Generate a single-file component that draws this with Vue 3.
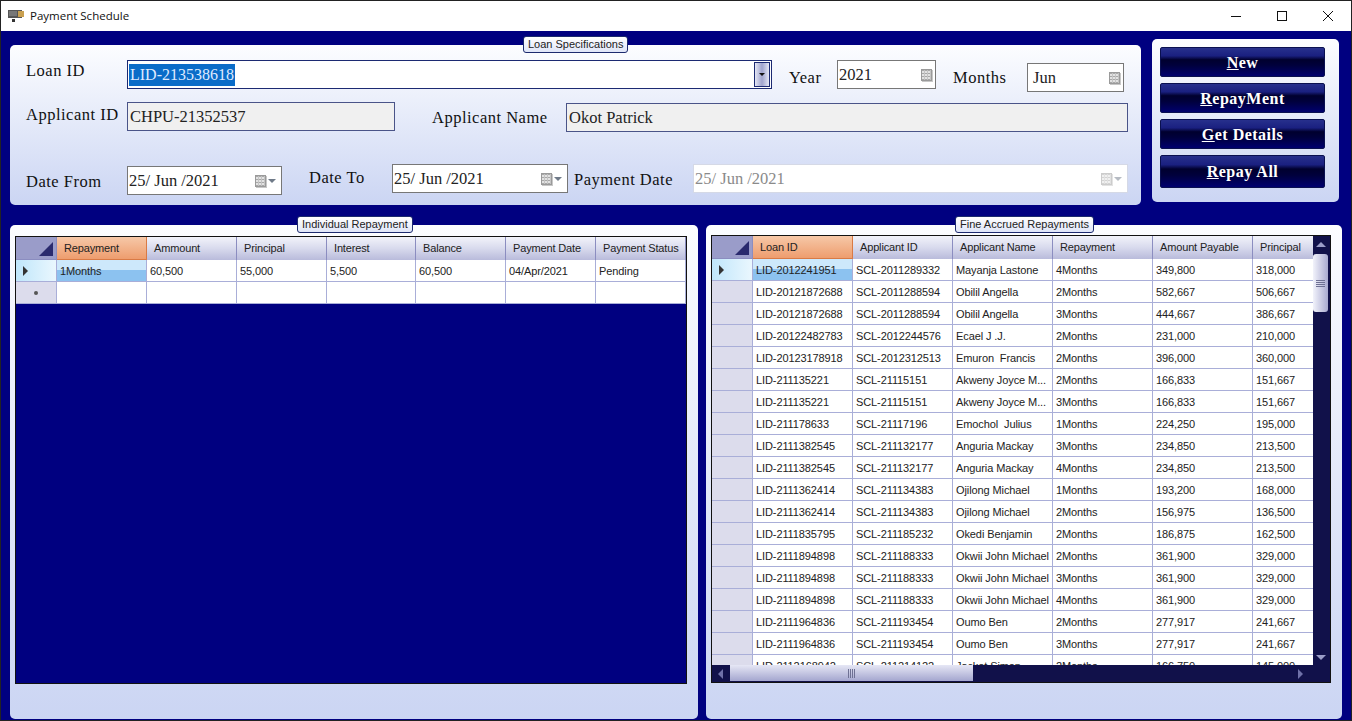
<script setup>
const left_cols = ['Repayment', 'Ammount', 'Principal', 'Interest', 'Balance', 'Payment Date', 'Payment Status']
const left_rows = [
    ['1Months', '60,500', '55,000', '5,500', '60,500', '04/Apr/2021', 'Pending']
]

const right_cols = ['Loan ID', 'Applicant ID', 'Applicant Name', 'Repayment', 'Amount Payable', 'Principal']
const right_rows = [
    ['LID-2012241951', 'SCL-2011289332', 'Mayanja Lastone', '4Months', '349,800', '318,000'],
    ['LID-20121872688', 'SCL-2011288594', 'Obilil Angella', '2Months', '582,667', '506,667'],
    ['LID-20121872688', 'SCL-2011288594', 'Obilil Angella', '3Months', '444,667', '386,667'],
    ['LID-20122482783', 'SCL-2012244576', 'Ecael J .J.', '2Months', '231,000', '210,000'],
    ['LID-20123178918', 'SCL-2012312513', 'Emuron  Francis', '2Months', '396,000', '360,000'],
    ['LID-211135221', 'SCL-21115151', 'Akweny Joyce M...', '2Months', '166,833', '151,667'],
    ['LID-211135221', 'SCL-21115151', 'Akweny Joyce M...', '3Months', '166,833', '151,667'],
    ['LID-211178633', 'SCL-21117196', 'Emochol  Julius', '1Months', '224,250', '195,000'],
    ['LID-2111382545', 'SCL-211132177', 'Anguria Mackay', '3Months', '234,850', '213,500'],
    ['LID-2111382545', 'SCL-211132177', 'Anguria Mackay', '4Months', '234,850', '213,500'],
    ['LID-2111362414', 'SCL-211134383', 'Ojilong Michael', '1Months', '193,200', '168,000'],
    ['LID-2111362414', 'SCL-211134383', 'Ojilong Michael', '2Months', '156,975', '136,500'],
    ['LID-2111835795', 'SCL-211185232', 'Okedi Benjamin', '2Months', '186,875', '162,500'],
    ['LID-2111894898', 'SCL-211188333', 'Okwii John Michael', '2Months', '361,900', '329,000'],
    ['LID-2111894898', 'SCL-211188333', 'Okwii John Michael', '3Months', '361,900', '329,000'],
    ['LID-2111894898', 'SCL-211188333', 'Okwii John Michael', '4Months', '361,900', '329,000'],
    ['LID-2111964836', 'SCL-211193454', 'Oumo Ben', '2Months', '277,917', '241,667'],
    ['LID-2111964836', 'SCL-211193454', 'Oumo Ben', '3Months', '277,917', '241,667'],
    ['LID-2112168942', 'SCL-211214122', 'Jackot Simon', '2Months', '166,750', '145,000']
]

const buttons = [
    { key: 'N', rest: 'ew' },
    { key: 'R', rest: 'epayMent' },
    { key: 'G', rest: 'et Details' },
    { key: 'R', rest: 'epay All' }
]
</script>

<template>
    <div class="window">
        <div class="titlebar">
            <svg class="app_icon" width="16" height="14" viewBox="0 0 16 14">
                <rect x="0" y="1" width="14" height="8" fill="#555"/>
                <rect x="1" y="2" width="8" height="5" fill="#777"/>
                <rect x="10" y="2" width="6" height="6" fill="#c9a050"/>
                <rect x="4" y="10" width="3" height="3" fill="#333"/>
            </svg>
            <span class="title">Payment Schedule</span>
            <div class="win_btns">
                <svg width="12" height="12" viewBox="0 0 12 12"><path d="M1 6.5h10" stroke="#111" fill="none"/></svg>
                <svg width="12" height="12" viewBox="0 0 12 12"><rect x="1.5" y="1.5" width="9" height="9" stroke="#111" fill="none"/></svg>
                <svg width="12" height="12" viewBox="0 0 12 12"><path d="M1 1l10 10M11 1L1 11" stroke="#111" fill="none"/></svg>
            </div>
        </div>

        <div class="content">
            <div class="top_row">
                <section class="panel spec">
                    <span class="legend spec_legend">Loan Specifications</span>
                    <div class="row row1">
                        <label class="lbl lbl_loan">Loan ID</label>
                        <div class="combo">
                            <span class="selected">LID-213538618</span>
                            <span class="combo_btn"><i></i></span>
                        </div>
                        <label class="lbl lbl_year">Year</label>
                        <div class="box year_box">
                            <span>2021</span>
                            <span class="cal"><i></i></span>
                        </div>
                        <label class="lbl lbl_months">Months</label>
                        <div class="box month_box">
                            <span>Jun</span>
                            <span class="cal"><i></i></span>
                        </div>
                    </div>
                    <div class="row row2">
                        <label class="lbl lbl_appid">Applicant ID</label>
                        <div class="readonly appid_box">CHPU-21352537</div>
                        <label class="lbl lbl_appname">Applicant Name</label>
                        <div class="readonly appname_box">Okot Patrick</div>
                    </div>
                    <div class="row row3">
                        <label class="lbl lbl_from">Date From</label>
                        <div class="box from_box">
                            <span>25/ Jun /2021</span>
                            <span class="cal"><i></i><b></b></span>
                        </div>
                        <label class="lbl lbl_to">Date To</label>
                        <div class="box to_box">
                            <span>25/ Jun /2021</span>
                            <span class="cal"><i></i><b></b></span>
                        </div>
                        <label class="lbl lbl_pay">Payment Date</label>
                        <div class="box pay_box disabled">
                            <span>25/ Jun /2021</span>
                            <span class="cal"><i></i><b></b></span>
                        </div>
                    </div>
                </section>

                <section class="panel actions">
                    <button v-for="(btn, i) in buttons" :key="i" class="action" :class="{ last: i == 3 }">
                        <u>{{ btn.key }}</u>{{ btn.rest }}
                    </button>
                </section>
            </div>

            <div class="bottom_row">
                <section class="panel grid_panel left_panel">
                    <span class="legend left_legend">Individual Repayment</span>
                    <div class="grid left_grid">
                        <div class="grid_head">
                            <div class="corner"><i></i></div>
                            <div v-for="(c, i) in left_cols" :key="c" class="hcell" :class="{ sorted: i == 0 }">{{ c }}</div>
                        </div>
                        <div v-for="(r, ri) in left_rows" :key="ri" class="grid_row">
                            <div class="rhead current"><i></i></div>
                            <div v-for="(v, ci) in r" :key="ci" class="cell" :class="{ active: ci == 0 }">{{ v }}</div>
                        </div>
                        <div class="grid_row">
                            <div class="rhead"><em></em></div>
                            <div v-for="c in left_cols" :key="c" class="cell"></div>
                        </div>
                    </div>
                </section>

                <section class="panel grid_panel right_panel">
                    <span class="legend right_legend">Fine Accrued Repayments</span>
                    <div class="grid right_grid">
                        <div class="rows_area">
                            <div class="grid_head">
                                <div class="corner"><i></i></div>
                                <div v-for="(c, i) in right_cols" :key="c" class="hcell" :class="{ sorted: i == 0 }">{{ c }}</div>
                            </div>
                            <div v-for="(r, ri) in right_rows" :key="ri" class="grid_row">
                                <div class="rhead" :class="{ current: ri == 0 }"><i v-if="ri == 0"></i></div>
                                <div v-for="(v, ci) in r" :key="ci" class="cell" :class="{ active: ri == 0 && ci == 0 }">{{ v }}</div>
                            </div>
                        </div>
                        <div class="vscroll">
                            <span class="arrow_up"></span>
                            <div class="vthumb"><i></i></div>
                            <span class="arrow_down"></span>
                        </div>
                        <div class="hscroll">
                            <span class="arrow_left"></span>
                            <div class="hthumb"><i></i></div>
                            <span class="arrow_right"></span>
                        </div>
                    </div>
                </section>
            </div>
        </div>
    </div>
</template>

<style>
html, body {
    margin: 0;
    background: #000080;
    overflow: hidden;
}
</style>

<style scoped>
* {
    box-sizing: border-box;
}
.window {
    width: 1352px;
    height: 721px;
    display: flex;
    flex-direction: column;
    background: #000080;
    border: 1px solid #222;
    overflow: hidden;
}
.titlebar {
    height: 30px;
    flex: none;
    background: #fff;
    display: flex;
    align-items: center;
    padding-left: 7px;
}
.app_icon {
    margin-right: 6px;
}
.title {
    font: 11.5px "Open Sans", sans-serif;
    color: #111;
    margin-top: -1px;
}
.win_btns {
    margin-left: auto;
    display: flex;
    gap: 34px;
    padding-right: 17px;
}
.content {
    flex: 1;
    display: flex;
    flex-direction: column;
    min-height: 0;
}
.top_row {
    display: flex;
    align-items: flex-start;
    height: 174px;
    flex: none;
}
.panel {
    position: relative;
    background: linear-gradient(#fcfdff, #cbd5f3);
    border-radius: 5px;
}
.legend {
    position: absolute;
    font: 11px "Liberation Sans", sans-serif;
    color: #222;
    background: linear-gradient(#fff, #dfe5f8);
    border: 1px solid #1c2a6e;
    border-radius: 3px;
    height: 17px;
    line-height: 15px;
    padding: 0 4px;
    white-space: nowrap;
}
.spec {
    width: 1131px;
    height: 160px;
    margin: 14px 0 0 9px;
    padding-left: 16px;
}
.spec_legend {
    left: 513px;
    top: -9px;
}
.row {
    display: flex;
    align-items: flex-start;
}
.row1 { height: 42px; padding-top: 15px; }
.row2 { height: 77px; padding-top: 15px; }
.lbl {
    font: 16.5px "Liberation Serif", serif;
    letter-spacing: 0.5px;
    color: #111;
    white-space: nowrap;
    flex: none;
}
.combo, .box, .readonly {
    font: 16.5px "Liberation Serif", serif;
    height: 29px;
    flex: none;
    display: flex;
    align-items: center;
    color: #222;
}
.combo {
    width: 645px;
    background: #fff;
    border: 1px solid #1c2a72;
    padding: 0 1px 0 1px;
    justify-content: space-between;
}
.selected {
    background: #0a6cc8;
    color: #dfeaff;
    font-size: 16px;
    line-height: 22px;
    padding: 0 1px;
}
.combo_btn {
    width: 16px;
    height: 25px;
    border: 1px solid #1c2a72;
    background: linear-gradient(90deg, #e4e6f4, #9fa3cd 50%, #e4e6f4);
    display: flex;
    align-items: center;
    justify-content: center;
}
.combo_btn i {
    border: 3px solid transparent;
    border-top: 3px solid #111;
    border-bottom: none;
}
.box {
    background: #fff;
    border: 1px solid #777;
    padding: 0 2px 0 1px;
    justify-content: space-between;
}
.cal {
    display: flex;
    align-items: center;
    gap: 2px;
    margin-right: 3px;
}
.cal i {
    width: 11px;
    height: 12px;
    background:
        repeating-linear-gradient(90deg, transparent 0 2px, #c4c4c4 2px 3px),
        repeating-linear-gradient(0deg, #a8a8a8 0 1px, #e2e2e2 1px 3px);
    border: 1px solid #9a9a9a;
    box-shadow: 1px 1px 0 #c8c8c8;
}
.cal b {
    border: 4px solid transparent;
    border-top: 4px solid #6f7a88;
    border-bottom: none;
}
.year_box .cal, .month_box .cal {
    margin-right: 1px;
}
.lbl_loan { width: 101px; margin-top: 1px; }
.lbl_year { width: 48px; margin: 8px 0 0 17px; }
.year_box { width: 99px; }
.lbl_months { width: 74px; margin: 8px 0 0 17px; }
.month_box { width: 97px; margin-top: 3px; padding-left: 5px; }
.lbl_appid { width: 101px; margin-top: 3px; }
.appid_box { width: 268px; }
.lbl_appname { width: 134px; margin: 6px 0 0 37px; }
.readonly {
    background: #f0f0f0;
    border: 1px solid #4a5488;
    padding: 0 2px;
}
.appname_box { width: 562px; margin-top: 1px; }
.lbl_from { width: 101px; margin-top: 8px; }
.from_box { width: 155px; margin-top: 2px; }
.lbl_to { width: 83px; margin: 4px 0 0 27px; }
.to_box { width: 176px; }
.lbl_pay { width: 119px; margin: 6px 0 0 6px; }
.pay_box { width: 435px; }
.disabled {
    border-color: #d5d9e6;
    color: #8a8a8a;
}
.disabled .cal { opacity: .5; }

.actions {
    width: 187px;
    height: 163px;
    margin: 8px 0 0 11px;
    padding: 8px 14px 0 8px;
    display: flex;
    flex-direction: column;
    gap: 6px;
}
.action {
    height: 30px;
    border: 1px solid #0a1050;
    border-radius: 2px;
    background: linear-gradient(#27308c, #1a2080 28%, #00002e 42%, #00003c 62%, #00006e);
    color: #fff;
    font: bold 16px "Liberation Serif", serif;
    letter-spacing: 0.5px;
    padding: 1px 0 0;
}
.action.last { height: 33px; }

.bottom_row {
    flex: 1;
    display: flex;
    min-height: 0;
}
.grid_panel {
    height: 494px;
    margin-top: 20px;
}
.left_panel {
    width: 688px;
    margin-left: 9px;
    padding: 11px 0 0 5px;
}
.right_panel {
    width: 636px;
    margin-left: 8px;
    padding: 10px 0 0 5px;
}
.left_legend { left: 287px; top: -9px; }
.right_legend { left: 249px; top: -9px; }
.grid {
    position: relative;
    background: #000080;
    border: 1px solid #111;
    font: 11px "Liberation Sans", sans-serif;
    overflow: hidden;
}
.left_grid {
    width: 672px;
    height: 448px;
}
.right_grid {
    width: 620px;
    height: 448px;
    background: #11114a;
}
.rows_area {
    width: 601px;
    height: 429px;
    overflow: hidden;
    background: #000080;
}
.grid_head {
    display: flex;
    height: 23px;
}
.grid_row {
    display: flex;
    height: 22px;
}
.corner {
    width: 41px;
    flex: none;
    background: #9a9cc9;
    border-right: 1px solid #8b8dc0;
    border-bottom: 1px solid #8b8dc0;
    position: relative;
}
.corner i {
    position: absolute;
    right: 3px;
    bottom: 3px;
    border-left: 14px solid transparent;
    border-bottom: 14px solid #2a2a6e;
}
.hcell {
    width: 90px;
    flex: none;
    line-height: 21px;
    padding: 1px 0 0 7px;
    letter-spacing: -0.15px;
    color: #222;
    background: linear-gradient(#f2f3fa, #d8daed 50%, #b9bbdb);
    border-right: 1px solid #8b8dc0;
    white-space: nowrap;
    overflow: hidden;
}
.hcell.sorted {
    background: linear-gradient(#f6c8a8, #ee9d6e);
    border-right-color: #d97a45;
    border-bottom: 1px solid #d97a45;
}
.rhead {
    width: 41px;
    flex: none;
    background: #dcdcec;
    border-right: 1px solid #a9aed8;
    border-bottom: 1px solid #a9aed8;
    display: flex;
    align-items: center;
    justify-content: center;
}
.rhead.current {
    background: linear-gradient(90deg, #bfe6fb, #eaf7fe);
    justify-content: flex-start;
    padding-left: 7px;
}
.rhead i {
    border-left: 5px solid #333;
    border-top: 5px solid transparent;
    border-bottom: 5px solid transparent;
}
.rhead em {
    width: 4px;
    height: 4px;
    border-radius: 50%;
    background: #555;
}
.cell {
    width: 90px;
    flex: none;
    background: #fff;
    color: #222;
    line-height: 20px;
    padding: 1px 0 0 3px;
    letter-spacing: -0.1px;
    border-right: 1px solid #a9aed8;
    border-bottom: 1px solid #a9aed8;
    white-space: pre;
    overflow: hidden;
}
.cell.active {
    background: linear-gradient(#cde8fb 50%, #8cc2f0 50%);
}
.left_grid .hcell:nth-child(5), .left_grid .cell:nth-child(5) {
    width: 89px;
}
.right_grid .hcell, .right_grid .cell {
    width: 100px;
}
.right_grid .hcell:last-child, .right_grid .cell:last-child {
    width: 60px;
    border-right: none;
}
.vscroll {
    position: absolute;
    right: 0;
    top: 0;
    width: 18px;
    height: 429px;
    padding-top: 18px;
}
.arrow_up, .arrow_down, .arrow_left, .arrow_right {
    position: absolute;
    width: 0;
    height: 0;
}
.arrow_up {
    top: 6px;
    left: 4px;
    border: 5px solid transparent;
    border-top: none;
    border-bottom: 5px solid #9b9dc8;
}
.arrow_down {
    bottom: 5px;
    left: 4px;
    border: 5px solid transparent;
    border-bottom: none;
    border-top: 5px solid #9b9dc8;
}
.vthumb {
    width: 15px;
    height: 58px;
    margin-left: 1px;
    border-radius: 3px;
    background: linear-gradient(90deg, #f2f3fb, #a8a9d0);
    display: flex;
    align-items: center;
    justify-content: center;
}
.vthumb i {
    width: 9px;
    height: 7px;
    background: repeating-linear-gradient(0deg, #6f7194 0 1px, transparent 1px 2px);
}
.hscroll {
    position: absolute;
    left: 0;
    bottom: 0;
    width: 601px;
    height: 17px;
}
.arrow_left {
    left: 6px;
    top: 4px;
    border: 5px solid transparent;
    border-left: none;
    border-right: 5px solid #6f71a8;
}
.arrow_right {
    right: 10px;
    top: 4px;
    border: 5px solid transparent;
    border-right: none;
    border-left: 5px solid #6f71a8;
}
.hthumb {
    position: absolute;
    left: 18px;
    top: 0;
    width: 243px;
    height: 16px;
    background: linear-gradient(#e6e7f5, #a4a6cf);
    display: flex;
    align-items: center;
    justify-content: center;
}
.hthumb i {
    width: 7px;
    height: 9px;
    background: repeating-linear-gradient(90deg, #6f7194 0 1px, transparent 1px 2px);
}
</style>
